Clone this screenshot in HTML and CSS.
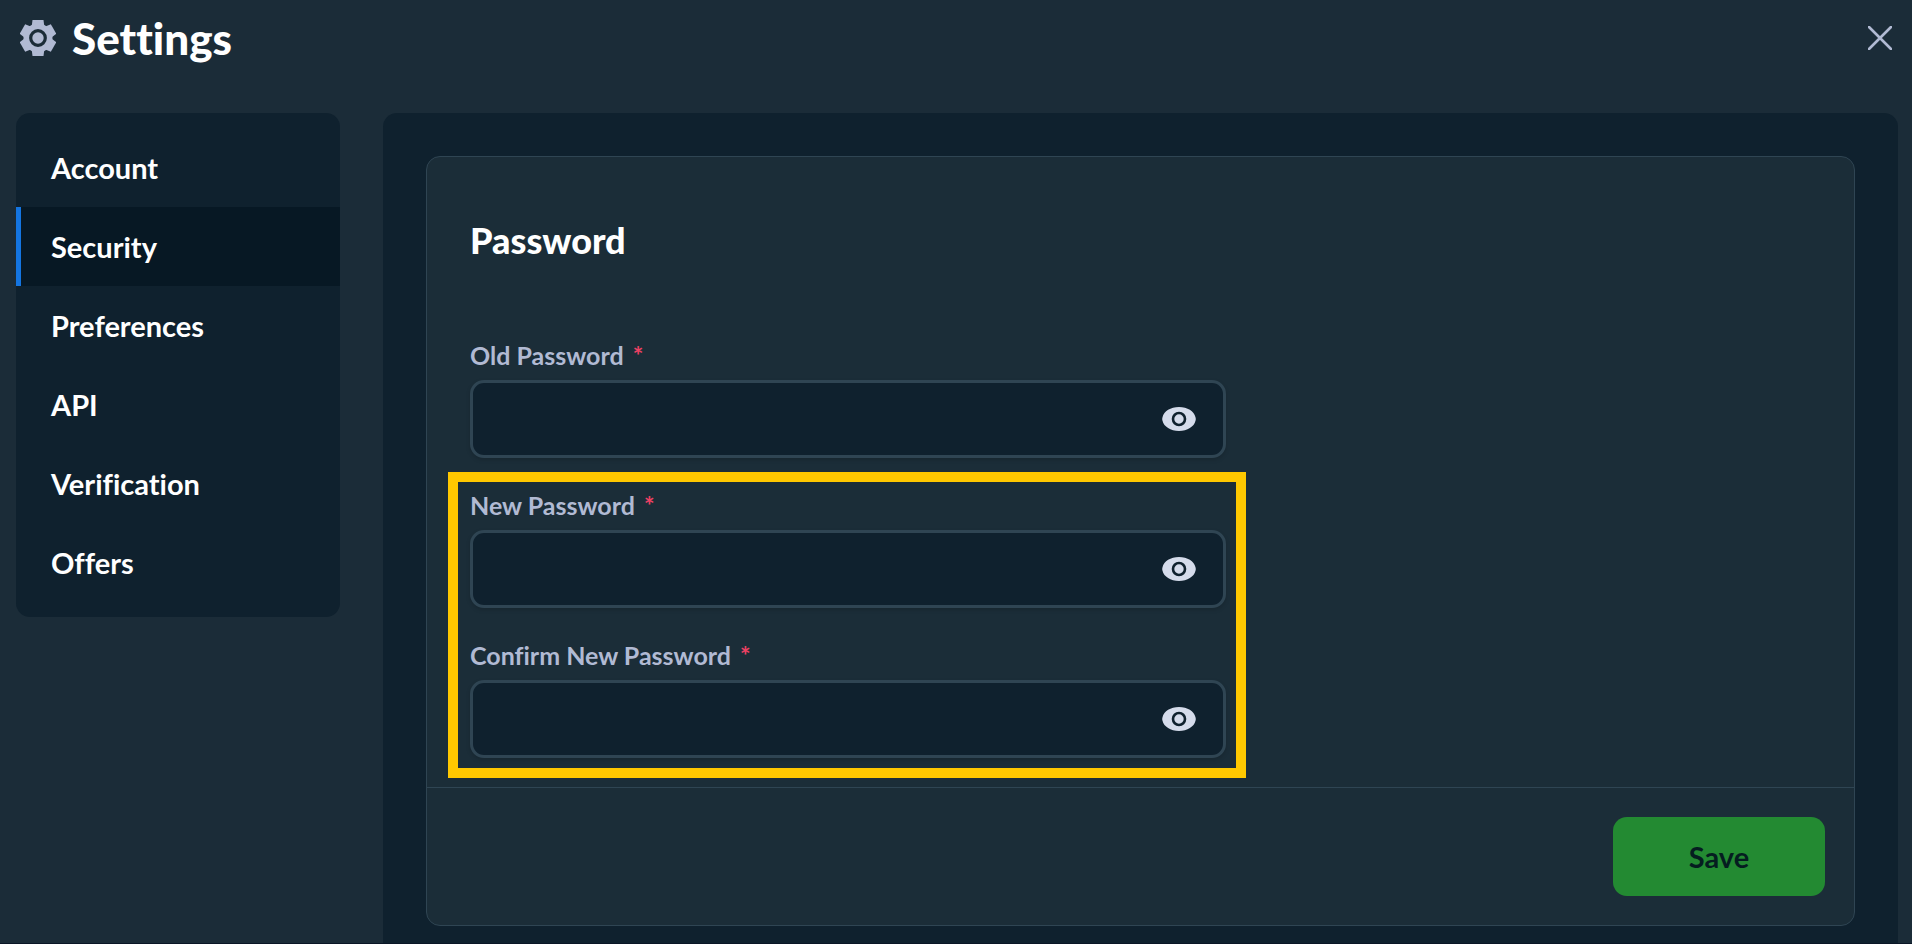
FILE: index.html
```html
<!DOCTYPE html>
<html lang="en">
<head>
  <meta charset="UTF-8" />
  <meta name="viewport" content="width=device-width, initial-scale=1" />
  <title>Settings</title>
  <link rel="stylesheet" href="styles.css">
</head>
<body>
  <!-- shared eye icon -->
  <svg class="sprite" aria-hidden="true">
    <symbol id="eye" viewBox="0 0 34 24">
      <path fill="#d5dceb" d="M17 0C8.500 0 2 4.200.5 10.200a6 6 0 0 0 0 3.600C2 19.800 8.500 24 17 24s15-4.200 16.500-10.200a6 6 0 0 0 0-3.600C32 4.200 25.500 0 17 0z"/>
      <circle cx="17" cy="12" r="6" fill="none" stroke="#0f212e" stroke-width="2.600"/>
    </symbol>
  </svg>

  <header class="header">
    <svg class="gear" viewBox="0 0 36 36" aria-hidden="true">
      <g fill="#b1bad3">
        <circle cx="18" cy="18" r="14.500"/>
        <path id="tooth" d="M12.500 0h11l1 8v20l-1 8h-11l-1-8V8z"/>
        <use href="#tooth" transform="rotate(60 18 18)"/>
        <use href="#tooth" transform="rotate(120 18 18)"/>
      </g>
      <circle cx="18" cy="18" r="7.300" fill="none" stroke="#1b2c38" stroke-width="3.200"/>
    </svg>
    <h1>Settings</h1>
    <button class="close" type="button" aria-label="Close">
      <svg viewBox="0 0 24 24" aria-hidden="true">
        <path d="M1 1l22 22M23 1L1 23" fill="none" stroke="#b1bad3" stroke-width="2.600" stroke-linecap="round"/>
      </svg>
    </button>
  </header>

  <div class="layout">
    <nav class="sidebar">
      <a href="#account">Account</a>
      <a class="active" href="#security">Security</a>
      <a href="#preferences">Preferences</a>
      <a href="#api">API</a>
      <a href="#verification">Verification</a>
      <a href="#offers">Offers</a>
    </nav>

    <main class="content">
      <form class="card">
        <div class="card-body">
          <h2>Password</h2>

          <div class="field">
            <label for="oldPassword">Old Password <span class="required">*</span></label>
            <div class="input-wrap">
              <input type="password" id="oldPassword" />
              <button type="button" aria-label="Show password"><svg><use href="#eye"/></svg></button>
            </div>
          </div>

          <div class="highlight">
            <div class="field">
              <label for="newPassword">New Password <span class="required">*</span></label>
              <div class="input-wrap">
                <input type="password" id="newPassword" />
                <button type="button" aria-label="Show password"><svg><use href="#eye"/></svg></button>
              </div>
            </div>

            <div class="field">
              <label for="confirmPassword">Confirm New Password <span class="required">*</span></label>
              <div class="input-wrap">
                <input type="password" id="confirmPassword" />
                <button type="button" aria-label="Show password"><svg><use href="#eye"/></svg></button>
              </div>
            </div>
          </div>
        </div>

        <div class="card-footer">
          <button class="save" type="submit">Save</button>
        </div>
      </form>
    </main>
  </div>
</body>
</html>
```
FILE: styles.css
```css
* {
  box-sizing: border-box;
}

body {
  display: flex;
  flex-direction: column;
  min-height: 100vh;
  margin: 0;
  font-family: Lato, "Liberation Sans", sans-serif;
  font-weight: bold;
  font-variant-ligatures: none;
  color: #fff;
  background: #1b2c38;
  border-bottom: 1px solid #0a1626;
}

h1, h2 {
  margin: 0;
  font-weight: 900;
}

button {
  padding: 0;
  border: 0;
  background: none;
  font: inherit;
  cursor: pointer;
}

.sprite {
  display: none;
}

.header {
  display: flex;
  align-items: center;
  height: 76px;
  padding: 0 20px;
}

.gear {
  width: 36px;
  height: 36px;
  margin-right: 16px;
}

h1 {
  font-size: 44px;
  line-height: 48px;
}

.close {
  margin-left: auto;
}

.close svg {
  display: block;
  width: 24px;
  height: 24px;
}

.layout {
  flex: 1;
  display: flex;
  align-items: flex-start;
  gap: 43px;
  padding: 37px 14px 0 16px;
}

.sidebar {
  flex: 0 0 324px;
  padding: 15px 0;
  background: #0f212e;
  border-radius: 14px;
}

.sidebar a {
  display: block;
  padding: 0 30px;
  border-left: 5px solid transparent;
  font-size: 29px;
  line-height: 79px;
  color: #fff;
  text-decoration: none;
}

.sidebar .active {
  background: #071824;
  border-left-color: #1475e1;
}

.content {
  flex: 1;
  align-self: stretch;
  padding: 43px 43px 17px;
  background: #0f212e;
  border-radius: 14px 14px 0 0;
}

.card {
  background: #1b2d38;
  border: 1px solid #2f4553;
  border-radius: 14px;
}

.card-body {
  padding: 61px 43px 29px;
}

h2 {
  margin-bottom: 78px;
  font-size: 36px;
  line-height: 44px;
}

.field {
  max-width: 756px;
  margin-bottom: 32px;
}

.field label {
  display: block;
  margin-bottom: 10px;
  font-size: 25px;
  line-height: 30px;
  color: #b1bad3;
}

.required {
  margin-left: 3px;
  color: #ed4163;
}

.input-wrap {
  display: flex;
  align-items: center;
  height: 78px;
  padding-right: 27px;
  background: #0f212e;
  border: 3px solid #2f4553;
  border-radius: 14px;
  box-shadow: 0 2px 4px rgba(0,0,0,0.15);
}

.input-wrap input {
  flex: 1;
  min-width: 0;
  height: 100%;
  padding: 0 20px;
  border: 0;
  outline: 0;
  background: none;
  font: inherit;
  font-size: 25px;
  color: #fff;
}

.input-wrap svg {
  display: block;
  width: 34px;
  height: 24px;
}

.highlight {
  position: relative;
  max-width: 756px;
}

.highlight .field:last-child {
  margin-bottom: 0;
}

/* yellow frame drawn around the new password fields */
.highlight::after {
  content: "";
  position: absolute;
  inset: -18px -20px -20px -22px;
  border: 10px solid #ffc800;
  pointer-events: none;
}

.card-footer {
  display: flex;
  justify-content: flex-end;
  padding: 29px;
  border-top: 1px solid #2f4553;
}

.save {
  width: 212px;
  height: 79px;
  border-radius: 14px;
  background: #238a32;
  font-size: 29px;
  color: #051d20;
}
```
